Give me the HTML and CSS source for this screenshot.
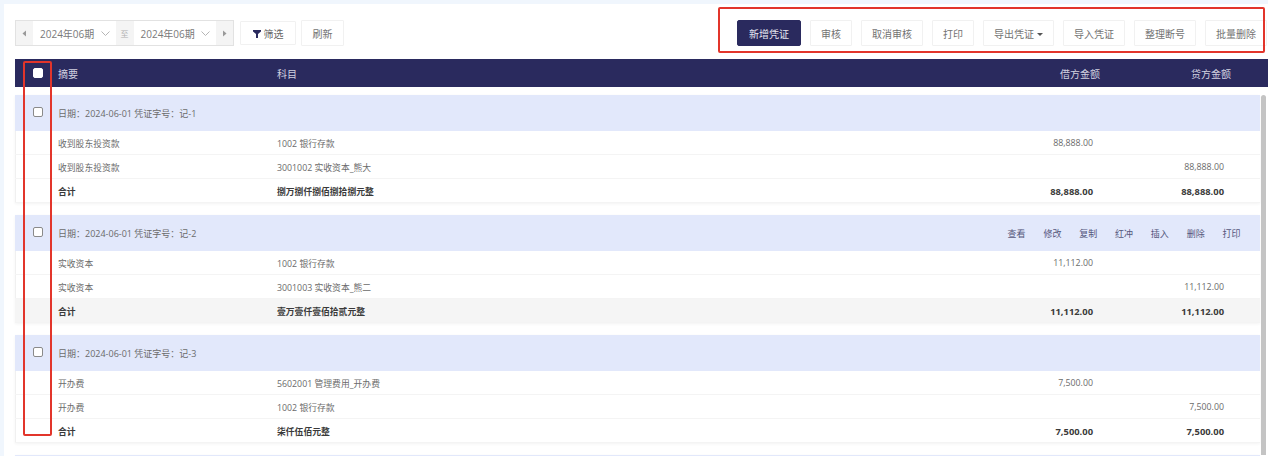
FILE: index.html
```html
<!DOCTYPE html>
<html lang="zh-CN">
<head>
<meta charset="utf-8">
<title>凭证列表</title>
<link rel="stylesheet" href="styles.css">
</head>
<body>
<main class="panel">
  <div class="toolbar">
    <div class="tools-left">
      <div class="period">
        <span class="step"><svg width="5" height="7" viewBox="0 0 5 7"><path d="M4 0.5v6L0.5 3.5z" fill="#999"/></svg></span>
        <span class="select">2024年06期<svg width="9" height="5" viewBox="0 0 9 5"><path d="M0.500 0.500l4 4 4-4" fill="none" stroke="#b5b5b5"/></svg></span>
        <span class="to">至</span>
        <span class="select">2024年06期<svg width="9" height="5" viewBox="0 0 9 5"><path d="M0.500 0.500l4 4 4-4" fill="none" stroke="#b5b5b5"/></svg></span>
        <span class="step"><svg width="5" height="7" viewBox="0 0 5 7"><path d="M1 0.500v6l3.500-3z" fill="#999"/></svg></span>
      </div>
      <button class="btn btn-filter"><svg width="8" height="8" viewBox="0 0 8 8"><path d="M0 0h8v1.500L5 4v4H3V4L0 1.500z" fill="#2a2a5e"/></svg>筛选</button>
      <button class="btn btn-refresh">刷新</button>
    </div>
    <div class="tools-right">
      <button class="btn btn-primary">新增凭证</button>
      <button class="btn btn-s">审核</button>
      <button class="btn">取消审核</button>
      <button class="btn btn-s">打印</button>
      <button class="btn btn-drop">导出凭证<i class="caret"></i></button>
      <button class="btn">导入凭证</button>
      <button class="btn">整理断号</button>
      <button class="btn">批量删除</button>
    </div>
  </div>

  <div class="thead">
    <span class="cell-check"><input type="checkbox" class="check check-head"></span>
    <span>摘要</span><span>科目</span><span class="num">借方金额</span><span class="num">贷方金额</span>
  </div>

  <div class="list">
    <section class="group">
      <div class="ghead"><span class="cell-check"><input type="checkbox" class="check"></span><span>日期：2024-06-01 凭证字号：记-1</span></div>
      <div class="row"><span></span><span>收到股东投资款</span><span>1002 银行存款</span><span class="num">88,888.00</span><span class="num"></span></div>
      <div class="row"><span></span><span>收到股东投资款</span><span>3001002 实收资本_熊大</span><span class="num"></span><span class="num">88,888.00</span></div>
      <div class="row total"><span></span><span>合计</span><span>捌万捌仟捌佰捌拾捌元整</span><span class="num">88,888.00</span><span class="num">88,888.00</span></div>
    </section>
    <section class="group">
      <div class="ghead"><span class="cell-check"><input type="checkbox" class="check"></span><span>日期：2024-06-01 凭证字号：记-2</span>
        <nav class="actions"><a>查看</a><a>修改</a><a>复制</a><a>红冲</a><a>插入</a><a>删除</a><a>打印</a></nav></div>
      <div class="row"><span></span><span>实收资本</span><span>1002 银行存款</span><span class="num">11,112.00</span><span class="num"></span></div>
      <div class="row"><span></span><span>实收资本</span><span>3001003 实收资本_熊二</span><span class="num"></span><span class="num">11,112.00</span></div>
      <div class="row total hover"><span></span><span>合计</span><span>壹万壹仟壹佰拾贰元整</span><span class="num">11,112.00</span><span class="num">11,112.00</span></div>
    </section>
    <section class="group">
      <div class="ghead"><span class="cell-check"><input type="checkbox" class="check"></span><span>日期：2024-06-01 凭证字号：记-3</span></div>
      <div class="row"><span></span><span>开办费</span><span>5602001 管理费用_开办费</span><span class="num">7,500.00</span><span class="num"></span></div>
      <div class="row"><span></span><span>开办费</span><span>1002 银行存款</span><span class="num"></span><span class="num">7,500.00</span></div>
      <div class="row total"><span></span><span>合计</span><span>柒仟伍佰元整</span><span class="num">7,500.00</span><span class="num">7,500.00</span></div>
    </section>
    <section class="group"><div class="ghead"></div></section>
    <div class="scrollbar"></div>
  </div>

  <div class="mark mark-top"></div>
  <div class="mark mark-left"></div>
</main>
</body>
</html>
```
FILE: styles.css
```css
* { box-sizing: border-box; }
html, body { margin: 0; height: 456px; overflow: hidden; }
body {
  background: #f0f6fd;
  font-family: "Open Sans", "Noto Sans CJK SC", sans-serif;
  font-size: 9px;
  color: #6b6b6b;
}
.panel {
  position: relative;
  margin: 4px 0 0 4px;
  height: 452px;
  padding: 16px 0 0 11px;
  background: #fff;
  overflow: hidden;
}
.toolbar {
  display: flex;
  justify-content: space-between;
  height: 26px;
  margin-bottom: 13px;
}
.tools-left, .tools-right { display: flex; align-items: stretch; }
.tools-right { gap: 9px; margin-right: 1px; }
.period {
  display: flex;
  width: 219px;
  border: 1px solid #e2e2e2;
  font-size: 10px;
  color: #7a7a7a;
}
.step, .to {
  display: flex;
  align-items: center;
  justify-content: center;
  flex: none;
  width: 18px;
  background: #f4f4f4;
  color: #b0b0b0;
  font-size: 8px;
}
.step { width: 17px; }
.select {
  flex: 1;
  display: flex;
  align-items: center;
  justify-content: space-between;
  padding: 0 6px 0 7px;
  background: #fff;
}
.btn {
  width: 62px;
  padding: 0;
  border: 1px solid #f1f1f1;
  border-radius: 1px;
  background: #fff;
  color: #737373;
  font: inherit;
  font-size: 10px;
  white-space: nowrap;
}
.btn-s { width: 42px; }
.btn-filter { width: 56px; margin: 1px 0 1px 6px; color: #666; }
.btn-filter svg { margin-right: 3px; }
.btn-refresh { width: 43px; margin-left: 5px; }
.btn-drop { width: 71px; }
.btn-primary { width: 64px; background: #2a2a5e; border-color: #2a2a5e; border-radius: 2px; color: #e6e6f0; }
.caret {
  display: inline-block;
  margin-left: 3px;
  vertical-align: middle;
  border: 3px solid transparent;
  border-top: 3px solid #555;
  border-bottom: 0;
}
.thead, .row {
  display: grid;
  grid-template-columns: 43px 219px 1fr 132px 131px;
  align-items: center;
}
.thead {
  height: 28px;
  margin-bottom: 8px;
  padding-right: 37px;
  background: #2a2a5e;
  color: #d2d2e0;
  font-size: 10px;
}
.cell-check { display: flex; justify-content: flex-start; padding-left: 18px; width: 43px; flex: none; }
.check {
  appearance: none;
  display: block;
  width: 10px;
  height: 10px;
  margin: 0;
  border: 1px solid #8a8a8a;
  border-radius: 2px;
  background: #fff;
}
.ghead .check { margin-top: -4px; }
.check-head { border-color: #fff; margin-top: -1px; }
.num { text-align: right; }
.list { position: relative; padding-right: 8px; }
.group {
  margin-bottom: 12px;
  border-left: 1px solid #f0f0f0;
  box-shadow: 0 1px 3px rgba(0, 0, 0, 0.05);
}
.ghead {
  display: flex;
  align-items: center;
  height: 36px;
  margin-left: -1px;
  padding-top: 1px;
  background: #e2e8fb;
}
.actions {
  display: flex;
  gap: 17.8px;
  margin-left: auto;
  margin-right: 19.5px;
  color: #55577c;
}
.row {
  height: 24px;
  margin-left: -1px;
  padding-top: 1px;
  padding-right: 36px;
  border-bottom: 1px solid #f4f4f4;
  font-size: 8.8px;
}
.total { font-weight: 700; color: #3a3a3a; }
.total .num { font-size: 9.400px; }
.hover { background: #f5f5f5; }
.scrollbar {
  position: absolute;
  top: 0;
  right: 2px;
  width: 5px;
  height: 360px;
  border-radius: 3px 3px 0 0;
  background: #c4c4c4;
}
.mark { position: absolute; border: 2px solid #e2352b; border-radius: 2px; pointer-events: none; }
.mark-top { top: 3px; left: 714px; width: 547px; height: 46px; }
.mark-left { top: 57px; left: 19px; width: 29px; height: 375px; }
```
